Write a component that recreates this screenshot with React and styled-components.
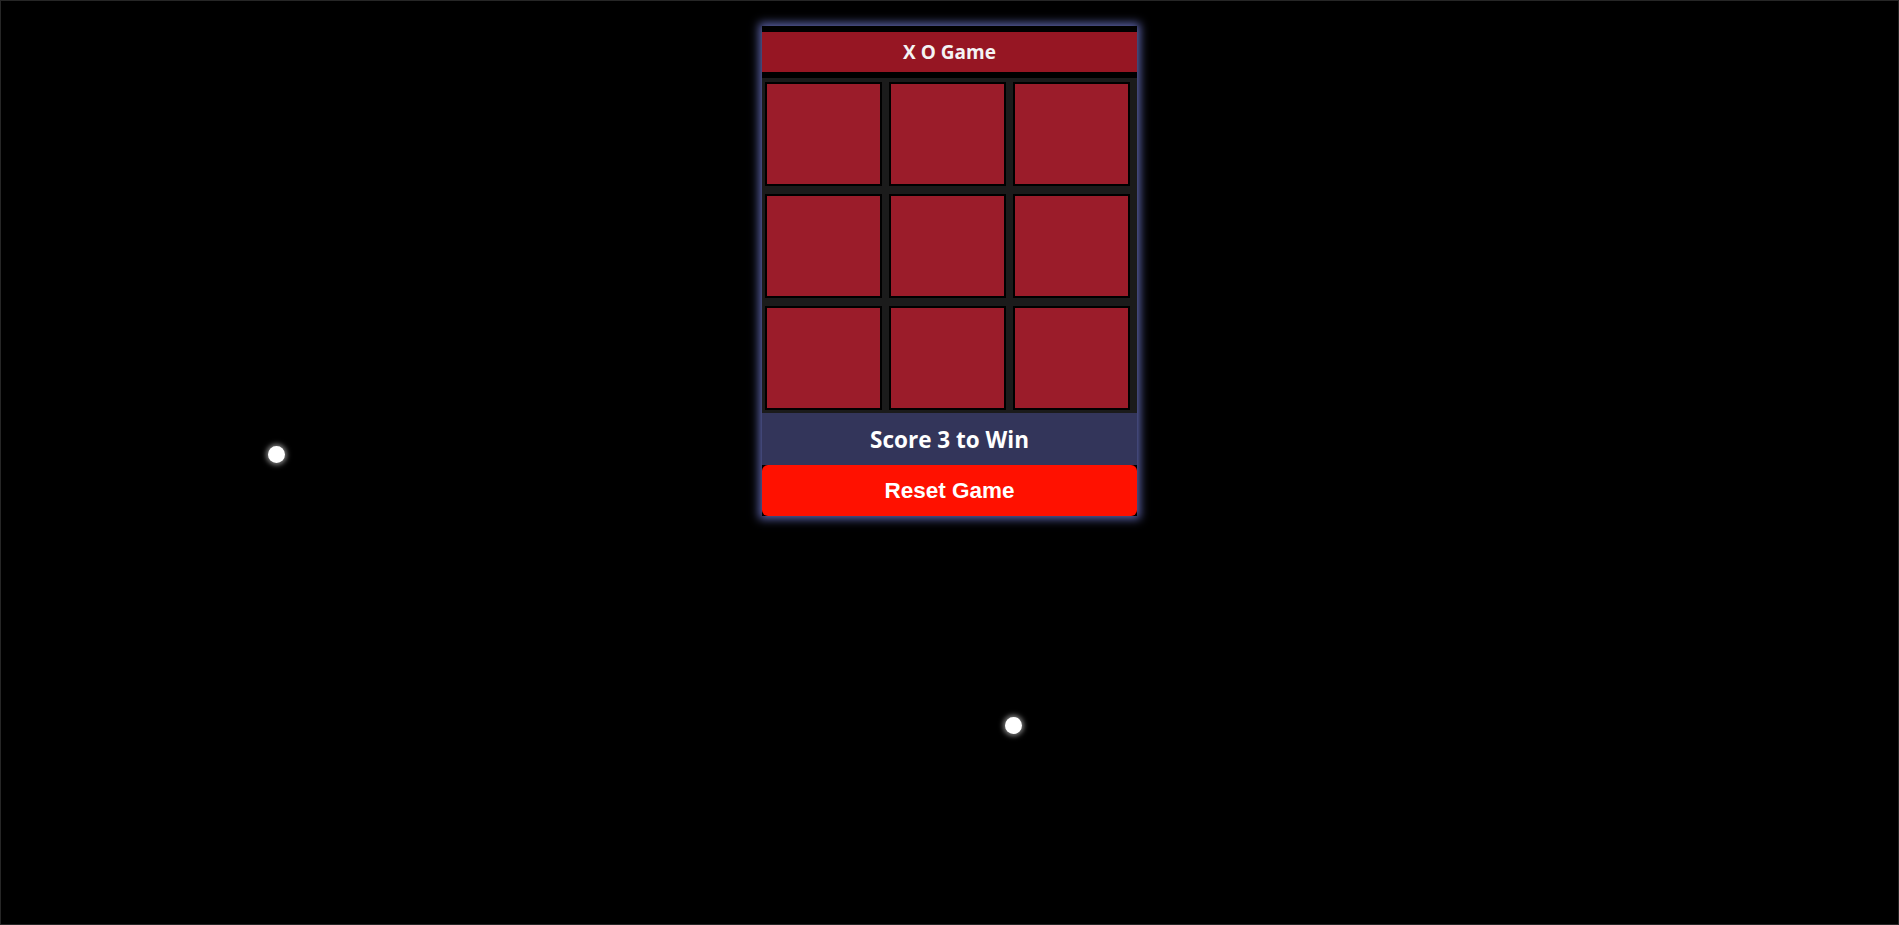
import React from 'react';
import styled, { createGlobalStyle } from 'styled-components';

const GlobalStyle = createGlobalStyle`
  html, body {
    margin: 0;
    padding: 0;
    background: #000;
  }
  * { box-sizing: border-box; }
`;

const Page = styled.div`
  position: relative;
  width: 100vw;
  height: 100vh;
  border: 1px solid #262626;
  background: #000;
  overflow: hidden;
  display: flex;
  justify-content: center;
  align-items: flex-start;
  padding-top: 25px;
`;

const Card = styled.div`
  width: 375px;
  background: #000;
  padding-top: 6px;
  box-shadow: 0 0 9px 3px #5d64aa;
  display: flex;
  flex-direction: column;
`;

const Header = styled.h1`
  margin: 0;
  height: 40px;
  background: #961623;
  color: #f4f4f4;
  font-family: "Open Sans", "Noto Sans", sans-serif;
  font-weight: 700;
  font-size: 19px;
  display: flex;
  align-items: center;
  justify-content: center;
  border-bottom: 6px solid #000;
  box-sizing: content-box;
`;

const Board = styled.div`
  background: #1b1b1b;
  display: grid;
  grid-template-columns: repeat(3, 117px);
  grid-auto-rows: 104px;
  column-gap: 7px;
  row-gap: 8px;
  padding: 4px 7px 3px 3px;
`;

const Cell = styled.button`
  background: #9b1c2a;
  border: 2px solid #000;
  padding: 0;
  margin: 0;
  cursor: pointer;
  color: #fff;
  font-family: "Open Sans", sans-serif;
  font-size: 48px;
  font-weight: 700;
`;

const Score = styled.div`
  height: 52px;
  background: #33355a;
  color: #fff;
  font-family: "Open Sans", "Noto Sans", sans-serif;
  font-weight: 700;
  font-size: 22.5px;
  display: flex;
  align-items: center;
  justify-content: center;
`;

const ResetButton = styled.button`
  height: 51px;
  border: none;
  border-radius: 6px;
  background: #ff1100;
  color: #fff;
  font-family: "Liberation Sans", Arial, sans-serif;
  font-weight: 700;
  font-size: 22.5px;
  cursor: pointer;
`;

const Dot = styled.span`
  position: absolute;
  width: 17px;
  height: 17px;
  border-radius: 50%;
  background: #fff;
  box-shadow: 0 0 5px 2px rgba(255, 255, 255, 0.5);
  left: ${p => p.x - 8.5}px;
  top: ${p => p.y - 8.5}px;
`;

export default function App() {
  const cells = Array.from({ length: 9 });
  return (
    <>
      <GlobalStyle />
      <Page>
        <Dot x={275} y={453} />
        <Dot x={1012} y={724} />
        <Card>
          <Header>X O Game</Header>
          <Board>
            {cells.map((_, i) => (
              <Cell key={i} />
            ))}
          </Board>
          <Score>Score 3 to Win</Score>
          <ResetButton>Reset Game</ResetButton>
        </Card>
      </Page>
    </>
  );
}
